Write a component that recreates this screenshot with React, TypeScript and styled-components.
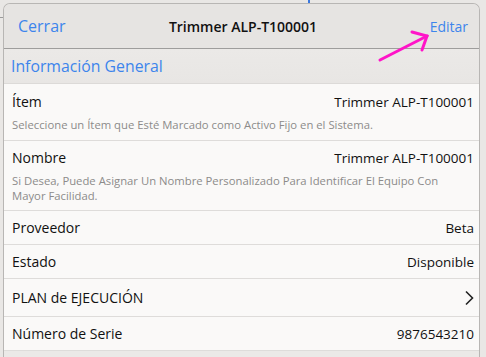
import React from "react";
import styled, { createGlobalStyle } from "styled-components";

const GlobalStyle = createGlobalStyle`
  html, body {
    margin: 0;
    padding: 0;
    background: #e9e7e5;
    font-family: "Open Sans", "Noto Sans", sans-serif;
    overflow: hidden;
  }
`;

const Screen = styled.div`
  position: relative;
  width: 486px;
  height: 357px;
  padding: 3px 6px 0 3px;
  box-sizing: border-box;
  background: #e9e7e5;
  overflow: hidden;
`;

const BackdropLine = styled.div`
  position: absolute;
  left: 0;
  top: 17px;
  width: 3px;
  height: 1px;
  background: #9a9a9a;
`;

const BackdropMark = styled.div`
  position: absolute;
  left: 308px;
  top: 0;
  width: 2px;
  height: 3px;
  background: #3a78e0;
`;

const Sheet = styled.div`
  height: 100%;
  border: 1px solid #b8b6b4;
  border-bottom: none;
  border-radius: 7px 7px 0 0;
  background: #ebe9e7;
  overflow: hidden;
`;

const Header = styled.div`
  display: grid;
  grid-template-columns: 1fr auto 1fr;
  align-items: center;
  height: 44px;
  padding: 0 11px 0 14px;
  background: #e6e4e2;
  border-bottom: 1px solid #9e9d9c;
`;

const NavButton = styled.span<{ $align: "left" | "right"; $size: number }>`
  color: #3d85ec;
  font-size: ${(p) => p.$size}px;
  justify-self: ${(p) => (p.$align === "left" ? "start" : "end")};
`;

const Title = styled.span`
  font-size: 14px;
  font-weight: 600;
  color: #111;
`;

const SectionTitle = styled.div`
  height: 34px;
  display: flex;
  align-items: center;
  padding-left: 7px;
  font-size: 15.8px;
  color: #3d85ec;
  background: linear-gradient(#ebe9e7, #e8e6e4);
  border-bottom: 1px solid #dcdad8;
`;

const List = styled.div`
  background: #faf9f8;
`;

const Row = styled.div<{ $height: number }>`
  min-height: ${(p) => p.$height}px;
  box-sizing: border-box;
  padding: 0 5px 0 8px;
  display: flex;
  flex-direction: column;
  justify-content: center;
  border-bottom: 1px solid #dedcda;
`;

const Line = styled.div`
  display: flex;
  justify-content: space-between;
  align-items: center;
  font-size: 13.5px;
  color: #111;
`;

const Label = styled.span`
  font-size: 14px;
`;

const Hint = styled.div`
  margin-top: 6px;
  padding-right: 20px;
  font-size: 11.3px;
  line-height: 15px;
  color: #8c8b8a;
`;

const Chevron = () => (
  <svg width="10" height="16" viewBox="0 0 10 16">
    <path d="M2 1.5 L8.5 8 L2 14.5" fill="none" stroke="#222" strokeWidth="1.6" />
  </svg>
);

const Arrow = styled.svg`
  position: absolute;
  left: 370px;
  top: 25px;
`;

const rows = [
  {
    label: "Ítem",
    value: "Trimmer ALP-T100001",
    hint: "Seleccione un Ítem que Esté Marcado como Activo Fijo en el Sistema.",
    height: 57,
  },
  {
    label: "Nombre",
    value: "Trimmer ALP-T100001",
    hint: "Si Desea, Puede Asignar Un Nombre Personalizado Para Identificar El Equipo Con Mayor Facilidad.",
    height: 70,
  },
  { label: "Proveedor", value: "Beta", height: 34 },
  { label: "Estado", value: "Disponible", height: 34 },
  { label: "PLAN de EJECUCIÓN", chevron: true, height: 38 },
  { label: "Número de Serie", value: "9876543210", height: 34 },
];

const App: React.FC = () => {
  return (
    <Screen>
      <GlobalStyle />
      <BackdropLine />
      <BackdropMark />
      <Sheet>
        <Header>
          <NavButton $align="left" $size={16}>Cerrar</NavButton>
          <Title>Trimmer ALP-T100001</Title>
          <NavButton $align="right" $size={14}>Editar</NavButton>
        </Header>
        <SectionTitle>Información General</SectionTitle>
        <List>
          {rows.map((r) => (
            <Row key={r.label} $height={r.height}>
              <Line>
                <Label>{r.label}</Label>
                {r.chevron ? <Chevron /> : <span>{r.value}</span>}
              </Line>
              {r.hint && <Hint>{r.hint}</Hint>}
            </Row>
          ))}
        </List>
      </Sheet>
      <Arrow width="70" height="45" viewBox="0 0 70 45">
        <g stroke="#ff14c8" strokeWidth="3" strokeLinecap="round" fill="none">
          <path d="M10 35 L57 11" />
          <path d="M42 7 L57 11 L52 25" />
        </g>
      </Arrow>
    </Screen>
  );
};

export default App;
